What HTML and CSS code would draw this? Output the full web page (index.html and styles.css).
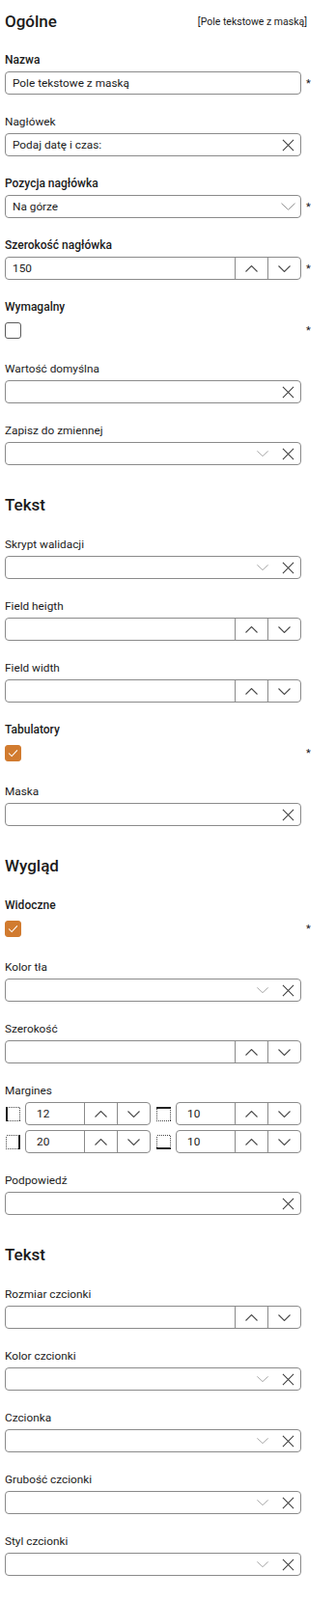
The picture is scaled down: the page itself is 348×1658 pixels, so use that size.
FILE: index.html
```html
<!DOCTYPE html>
<html lang="pl">

<head>
    <meta charset="UTF-8">
    <meta name="viewport" content="width=device-width, initial-scale=1.0">
    <title>Właściwości</title>
    <link rel="stylesheet" href="styles.css">
</head>

<body>
    <svg class="sprite" width="0" height="0">
        <symbol id="i-x" viewBox="0 0 14 14"><path d="M1 1L13 13M13 1L1 13" fill="none" stroke="currentColor" stroke-width="1.1"/></symbol>
        <symbol id="i-chev" viewBox="0 0 16 8"><path d="M0.5 0.5L8 7.5L15.5 0.5" fill="none" stroke="currentColor" stroke-width="1"/></symbol>
        <symbol id="i-up" viewBox="0 0 13 7"><path d="M0.5 6.5L6.5 0.5L12.5 6.5" fill="none" stroke="currentColor" stroke-width="1.1"/></symbol>
        <symbol id="i-down" viewBox="0 0 13 7"><path d="M0.5 0.5L6.5 6.5L12.5 0.5" fill="none" stroke="currentColor" stroke-width="1.1"/></symbol>
        <symbol id="i-check" viewBox="0 0 17 17"><path d="M3.5 8.5L7 12L13.5 5" fill="none" stroke="#fff" stroke-width="1.2"/></symbol>
        <symbol id="m-left" viewBox="0 0 17 17"><rect x="1.5" y="1.5" width="14" height="14" fill="none" stroke="#444" stroke-dasharray="1 1" shape-rendering="crispEdges"/><path d="M2 1V16" stroke="#222" stroke-width="2" shape-rendering="crispEdges"/></symbol>
        <symbol id="m-top" viewBox="0 0 17 17"><rect x="1.5" y="1.5" width="14" height="14" fill="none" stroke="#444" stroke-dasharray="1 1" shape-rendering="crispEdges"/><path d="M1 2H16" stroke="#222" stroke-width="2" shape-rendering="crispEdges"/></symbol>
        <symbol id="m-right" viewBox="0 0 17 17"><rect x="1.5" y="1.5" width="14" height="14" fill="none" stroke="#444" stroke-dasharray="1 1" shape-rendering="crispEdges"/><path d="M15 1V16" stroke="#222" stroke-width="2" shape-rendering="crispEdges"/></symbol>
        <symbol id="m-bottom" viewBox="0 0 17 17"><rect x="1.5" y="1.5" width="14" height="14" fill="none" stroke="#444" stroke-dasharray="1 1" shape-rendering="crispEdges"/><path d="M1 15H16" stroke="#222" stroke-width="2" shape-rendering="crispEdges"/></symbol>
    </svg>

    <div class="panel">
        <div class="head">
            <h2>Ogólne</h2>
            <span class="type">[Pole tekstowe z maską]</span>
        </div>

        <div class="field">
            <label class="strong">Nazwa</label>
            <div class="row">
                <div class="box"><input type="text" value="Pole tekstowe z maską"></div>
                <span class="req">*</span>
            </div>
        </div>

        <div class="field">
            <label>Nagłówek</label>
            <div class="row">
                <div class="box">
                    <input type="text" value="Podaj datę i czas:">
                    <span class="btn"><svg class="ico-x"><use href="#i-x"/></svg></span>
                </div>
            </div>
        </div>

        <div class="field">
            <label class="strong">Pozycja nagłówka</label>
            <div class="row">
                <div class="box">
                    <input type="text" value="Na górze">
                    <span class="btn"><svg class="ico-chev"><use href="#i-chev"/></svg></span>
                </div>
                <span class="req">*</span>
            </div>
        </div>

        <div class="field">
            <label class="strong">Szerokość nagłówka</label>
            <div class="row">
                <div class="box">
                    <input type="text" value="150">
                    <span class="spin"><svg class="ico-spin"><use href="#i-up"/></svg></span>
                    <span class="spin"><svg class="ico-spin"><use href="#i-down"/></svg></span>
                </div>
                <span class="req">*</span>
            </div>
        </div>

        <div class="field">
            <label class="strong">Wymagalny</label>
            <div class="row">
                <div class="check-line"><span class="check"></span></div>
                <span class="req">*</span>
            </div>
        </div>

        <div class="field">
            <label>Wartość domyślna</label>
            <div class="row">
                <div class="box">
                    <input type="text">
                    <span class="btn"><svg class="ico-x"><use href="#i-x"/></svg></span>
                </div>
            </div>
        </div>

        <div class="field">
            <label>Zapisz do zmiennej</label>
            <div class="row">
                <div class="box">
                    <input type="text">
                    <span class="btn"><svg class="ico-chev small"><use href="#i-chev"/></svg></span>
                    <span class="btn"><svg class="ico-x"><use href="#i-x"/></svg></span>
                </div>
            </div>
        </div>

        <div class="section">
            <h2>Tekst</h2>

            <div class="field">
                <label>Skrypt walidacji</label>
                <div class="row">
                    <div class="box">
                        <input type="text">
                        <span class="btn"><svg class="ico-chev small"><use href="#i-chev"/></svg></span>
                        <span class="btn"><svg class="ico-x"><use href="#i-x"/></svg></span>
                    </div>
                </div>
            </div>

            <div class="field">
                <label>Field heigth</label>
                <div class="row">
                    <div class="box">
                        <input type="text">
                        <span class="spin"><svg class="ico-spin"><use href="#i-up"/></svg></span>
                        <span class="spin"><svg class="ico-spin"><use href="#i-down"/></svg></span>
                    </div>
                </div>
            </div>

            <div class="field">
                <label>Field width</label>
                <div class="row">
                    <div class="box">
                        <input type="text">
                        <span class="spin"><svg class="ico-spin"><use href="#i-up"/></svg></span>
                        <span class="spin"><svg class="ico-spin"><use href="#i-down"/></svg></span>
                    </div>
                </div>
            </div>

            <div class="field">
                <label class="strong">Tabulatory</label>
                <div class="row">
                    <div class="check-line"><span class="check on"><svg><use href="#i-check"/></svg></span></div>
                    <span class="req">*</span>
                </div>
            </div>

            <div class="field">
                <label>Maska</label>
                <div class="row">
                    <div class="box">
                        <input type="text">
                        <span class="btn"><svg class="ico-x"><use href="#i-x"/></svg></span>
                    </div>
                </div>
            </div>
        </div>

        <div class="section">
            <h2>Wygląd</h2>

            <div class="field">
                <label class="strong">Widoczne</label>
                <div class="row">
                    <div class="check-line"><span class="check on"><svg><use href="#i-check"/></svg></span></div>
                    <span class="req">*</span>
                </div>
            </div>

            <div class="field">
                <label>Kolor tła</label>
                <div class="row">
                    <div class="box">
                        <input type="text">
                        <span class="btn"><svg class="ico-chev small"><use href="#i-chev"/></svg></span>
                        <span class="btn"><svg class="ico-x"><use href="#i-x"/></svg></span>
                    </div>
                </div>
            </div>

            <div class="field">
                <label>Szerokość</label>
                <div class="row">
                    <div class="box">
                        <input type="text">
                        <span class="spin"><svg class="ico-spin"><use href="#i-up"/></svg></span>
                        <span class="spin"><svg class="ico-spin"><use href="#i-down"/></svg></span>
                    </div>
                </div>
            </div>

            <div class="field">
                <label>Margines</label>
                <div class="margins">
                    <div class="mpair">
                        <svg class="ico-m"><use href="#m-left"/></svg>
                        <div class="box">
                            <input type="text" value="12">
                            <span class="spin"><svg class="ico-spin"><use href="#i-up"/></svg></span>
                            <span class="spin"><svg class="ico-spin"><use href="#i-down"/></svg></span>
                        </div>
                    </div>
                    <div class="mpair">
                        <svg class="ico-m"><use href="#m-top"/></svg>
                        <div class="box">
                            <input type="text" value="10">
                            <span class="spin"><svg class="ico-spin"><use href="#i-up"/></svg></span>
                            <span class="spin"><svg class="ico-spin"><use href="#i-down"/></svg></span>
                        </div>
                    </div>
                    <div class="mpair">
                        <svg class="ico-m"><use href="#m-right"/></svg>
                        <div class="box">
                            <input type="text" value="20">
                            <span class="spin"><svg class="ico-spin"><use href="#i-up"/></svg></span>
                            <span class="spin"><svg class="ico-spin"><use href="#i-down"/></svg></span>
                        </div>
                    </div>
                    <div class="mpair">
                        <svg class="ico-m"><use href="#m-bottom"/></svg>
                        <div class="box">
                            <input type="text" value="10">
                            <span class="spin"><svg class="ico-spin"><use href="#i-up"/></svg></span>
                            <span class="spin"><svg class="ico-spin"><use href="#i-down"/></svg></span>
                        </div>
                    </div>
                </div>
            </div>

            <div class="field">
                <label>Podpowiedź</label>
                <div class="row">
                    <div class="box">
                        <input type="text">
                        <span class="btn"><svg class="ico-x"><use href="#i-x"/></svg></span>
                    </div>
                </div>
            </div>
        </div>

        <div class="section">
            <h2>Tekst</h2>

            <div class="field">
                <label>Rozmiar czcionki</label>
                <div class="row">
                    <div class="box">
                        <input type="text">
                        <span class="spin"><svg class="ico-spin"><use href="#i-up"/></svg></span>
                        <span class="spin"><svg class="ico-spin"><use href="#i-down"/></svg></span>
                    </div>
                </div>
            </div>

            <div class="field">
                <label>Kolor czcionki</label>
                <div class="row">
                    <div class="box">
                        <input type="text">
                        <span class="btn"><svg class="ico-chev small"><use href="#i-chev"/></svg></span>
                        <span class="btn"><svg class="ico-x"><use href="#i-x"/></svg></span>
                    </div>
                </div>
            </div>

            <div class="field">
                <label>Czcionka</label>
                <div class="row">
                    <div class="box">
                        <input type="text">
                        <span class="btn"><svg class="ico-chev small"><use href="#i-chev"/></svg></span>
                        <span class="btn"><svg class="ico-x"><use href="#i-x"/></svg></span>
                    </div>
                </div>
            </div>

            <div class="field">
                <label>Grubość czcionki</label>
                <div class="row">
                    <div class="box">
                        <input type="text">
                        <span class="btn"><svg class="ico-chev small"><use href="#i-chev"/></svg></span>
                        <span class="btn"><svg class="ico-x"><use href="#i-x"/></svg></span>
                    </div>
                </div>
            </div>

            <div class="field">
                <label>Styl czcionki</label>
                <div class="row">
                    <div class="box">
                        <input type="text">
                        <span class="btn"><svg class="ico-chev small"><use href="#i-chev"/></svg></span>
                        <span class="btn"><svg class="ico-x"><use href="#i-x"/></svg></span>
                    </div>
                </div>
            </div>
        </div>
    </div>
</body>

</html>
```

FILE: styles.css
```css
* {
    box-sizing: border-box;
}

body {
    margin: 0;
    background: #fff;
    font-family: Roboto, 'Noto Sans', sans-serif;
    font-size: 11.8px;
    color: #1b1b1b;
}

.sprite {
    position: absolute;
    overflow: hidden;
}

.panel {
    width: 322px;
    padding: 10px 0 20px 5px;
}

.head {
    display: flex;
    justify-content: space-between;
    align-items: center;
    padding-right: 4px;
    margin-bottom: 19px;
}

h2 {
    margin: 0;
    font-size: 17px;
    font-weight: 500;
    line-height: 24px;
}

.type {
    font-size: 10.5px;
}

/* padding, not margin: the last field's margin would swallow it */
.section {
    padding-top: 10px;
}

.section h2 {
    margin-bottom: 20px;
}

.field {
    margin-bottom: 19px;
}

.field > label {
    display: block;
    line-height: 18px;
    margin-bottom: 3px;
}

.field > label.strong {
    font-weight: 500;
    font-size: 12px;
}

.row {
    display: flex;
    align-items: center;
}

.box {
    width: 307px;
    height: 24px;
    border: 1px solid #8a8a8a;
    border-radius: 4px;
    display: flex;
    align-items: stretch;
}

.box input {
    flex: 1;
    min-width: 0;
    border: 0;
    outline: 0;
    background: transparent;
    font: inherit;
    color: #1b1b1b;
    padding: 0 0 0 7px;
}

.req {
    margin-left: 5px;
    font-size: 11px;
}

.btn {
    width: 26px;
    display: flex;
    align-items: center;
    justify-content: center;
    color: #3c3c3c;
}

.spin {
    width: 34px;
    border-left: 1px solid #8a8a8a;
    display: flex;
    align-items: center;
    justify-content: center;
    color: #4a4a4a;
}

.ico-x {
    width: 13px;
    height: 13px;
}

.ico-chev {
    width: 15px;
    height: 8px;
    color: #8a8a8a;
}

.ico-chev.small {
    width: 12px;
    height: 6px;
}

.ico-spin {
    width: 13px;
    height: 7px;
}

.check-line {
    width: 307px;
    height: 24px;
    padding-top: 4px;
}

.check {
    display: block;
    width: 17px;
    height: 17px;
    border: 1px solid #5a5a5a;
    border-radius: 3px;
}

.check.on {
    background: #d17b2f;
    border-color: #d17b2f;
}

.check svg {
    display: block;
    width: 15px;
    height: 15px;
}

.margins {
    width: 307px;
    display: grid;
    grid-template-columns: 1fr 1fr;
    column-gap: 5px;
    row-gap: 5px;
}

.mpair {
    display: flex;
    align-items: center;
    gap: 4px;
}

.mpair .box {
    width: 130px;
}

.mpair .box input {
    padding-left: 11px;
}

.ico-m {
    width: 17px;
    height: 17px;
    flex: none;
}
```
